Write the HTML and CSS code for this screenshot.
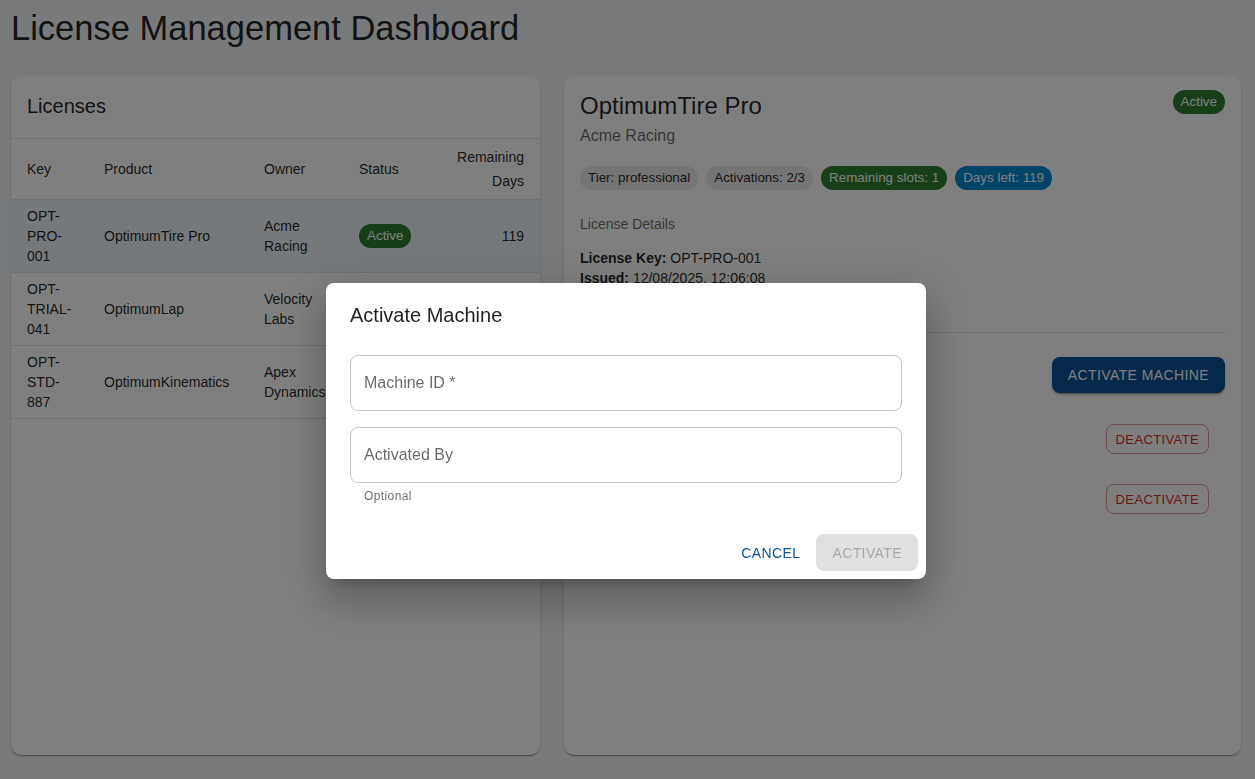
FILE: index.html
```html
<!DOCTYPE html>
<html lang="en">
<head>
<meta charset="utf-8">
<title>License Management Dashboard</title>
<link rel="stylesheet" href="styles.css">
</head>
<body>
<div class="page">
  <h1 class="title">License Management Dashboard</h1>
  <div class="grid">
    <section class="card list-card">
      <div class="card-head"><h2 class="card-title">Licenses</h2></div>
      <table class="lic-table">
        <colgroup>
          <col class="c-key"><col class="c-product"><col class="c-owner"><col class="c-status"><col class="c-days">
        </colgroup>
        <thead>
          <tr><th>Key</th><th>Product</th><th>Owner</th><th>Status</th><th class="num">Remaining Days</th></tr>
        </thead>
        <tbody>
          <tr class="selected"><td>OPT-PRO-001</td><td>OptimumTire Pro</td><td>Acme Racing</td><td><span class="chip chip-success">Active</span></td><td class="num">119</td></tr>
          <tr><td>OPT-TRIAL-041</td><td>OptimumLap</td><td>Velocity Labs</td><td><span class="chip chip-warning">Trial</span></td><td class="num">12</td></tr>
          <tr><td>OPT-STD-887</td><td>OptimumKinematics</td><td>Apex Dynamics</td><td><span class="chip chip-success">Active</span></td><td class="num">287</td></tr>
        </tbody>
      </table>
    </section>

    <section class="card detail-card">
      <div class="detail-head">
        <div>
          <h2 class="detail-title">OptimumTire Pro</h2>
          <p class="owner">Acme Racing</p>
        </div>
        <span class="chip chip-success">Active</span>
      </div>
      <div class="chips">
        <span class="chip">Tier: professional</span>
        <span class="chip">Activations: 2/3</span>
        <span class="chip chip-success">Remaining slots: 1</span>
        <span class="chip chip-info">Days left: 119</span>
      </div>
      <p class="section-label">License Details</p>
      <div class="details">
        <p><b>License Key:</b> OPT-PRO-001</p>
        <p><b>Issued:</b> 12/08/2025, 12:06:08</p>
        <p><b>Expires:</b> 06/04/2026, 12:06:08</p>
      </div>
      <hr class="divider">
      <div class="machines-head">
        <h3 class="machines-title">Activated Machines</h3>
        <button class="btn btn-contained">Activate Machine</button>
      </div>
      <ul class="machines">
        <li class="machine">
          <div><div class="m-id">WS-ENG-01</div><div class="m-sub">Activated by j.smith · 12/08/2025</div></div>
          <button class="btn btn-outlined-error">Deactivate</button>
        </li>
        <li class="machine">
          <div><div class="m-id">LAPTOP-TRACK-07</div><div class="m-sub">Activated by a.jones · 14/08/2025</div></div>
          <button class="btn btn-outlined-error">Deactivate</button>
        </li>
      </ul>
    </section>
  </div>
</div>

<div class="backdrop">
  <div class="dialog" role="dialog" aria-labelledby="dlg-title">
    <h2 class="dialog-title" id="dlg-title">Activate Machine</h2>
    <div class="dialog-content">
      <div class="field"><span class="field-label">Machine ID *</span></div>
      <div class="field field-second"><span class="field-label">Activated By</span></div>
      <div class="helper">Optional</div>
    </div>
    <div class="dialog-actions">
      <button class="btn btn-text">Cancel</button>
      <button class="btn btn-disabled" disabled>Activate</button>
    </div>
  </div>
</div>
</body>
</html>
```

FILE: styles.css
```css
* { box-sizing: border-box; }

html, body {
  margin: 0;
  padding: 0;
  height: 100%;
}

body {
  background: #f2f4f8;
  font-family: "Liberation Sans", Arial, Helvetica, sans-serif;
  color: rgba(0, 0, 0, 0.87);
  overflow: hidden;
}

.page {
  padding: 0 14px 0 11px;
}

.title {
  margin: 7px 0 26px 0;
  font-size: 34.5px;
  line-height: 42px;
  font-weight: 400;
}

.grid {
  display: grid;
  grid-template-columns: 529px 1fr;
  column-gap: 24px;
  height: 680px;
}

.card {
  background: #fff;
  border-radius: 10px;
  box-shadow: 0 2px 1px -1px rgba(0,0,0,0.2), 0 1px 1px 0 rgba(0,0,0,0.14), 0 1px 3px 0 rgba(0,0,0,0.12);
  overflow: hidden;
}

.card-head {
  padding: 15px 16px 16px 16px;
  border-bottom: 1px solid #e0e0e0;
}

.card-title {
  margin: 0;
  font-size: 20px;
  line-height: 32px;
  font-weight: 400;
}

.lic-table {
  width: 100%;
  table-layout: fixed;
  border-collapse: collapse;
  font-size: 14px;
}

.c-key { width: 77px; }
.c-product { width: 160px; }
.c-owner { width: 95px; }
.c-status { width: 97px; }
.c-days { width: 100px; }

.lic-table th {
  text-align: left;
  font-weight: 400;
  line-height: 24px;
  padding: 6px 16px;
  border-bottom: 1px solid #e0e0e0;
  vertical-align: middle;
}

.lic-table td {
  line-height: 20px;
  padding: 6px 16px;
  border-bottom: 1px solid #e0e0e0;
  vertical-align: middle;
  word-wrap: break-word;
}

.lic-table .num { text-align: right; }

.lic-table tr.selected td {
  background: rgba(11, 83, 148, 0.08);
}

.chip {
  display: inline-flex;
  align-items: center;
  height: 24px;
  padding: 0 8px;
  border-radius: 12px;
  font-size: 13.4px;
  line-height: 1;
  background: rgba(0, 0, 0, 0.08);
  color: rgba(0, 0, 0, 0.87);
  white-space: nowrap;
}

.chip-success { background: #2e7d32; color: #fff; }
.chip-info { background: #0288d1; color: #fff; }
.chip-warning { background: #ed6c02; color: #fff; }

.detail-card {
  padding: 15px 16px 16px 16px;
}

.detail-head {
  display: flex;
  justify-content: space-between;
  align-items: flex-start;
}

.detail-title {
  margin: 0;
  font-size: 24px;
  line-height: 32px;
  font-weight: 400;
}

.owner {
  margin: 0;
  font-size: 16px;
  line-height: 28px;
  color: rgba(0, 0, 0, 0.6);
}

.chips {
  display: flex;
  gap: 8px;
  margin-top: 16px;
}

.section-label {
  margin: 24px 0 14px 0;
  font-size: 14px;
  line-height: 20px;
  color: rgba(0, 0, 0, 0.6);
}

.details p {
  margin: 0;
  font-size: 14px;
  line-height: 20px;
}

.divider {
  margin: 24px 0 24px 0;
  border: 0;
  border-top: 1px solid #e0e0e0;
}

.machines-head {
  display: flex;
  justify-content: space-between;
  align-items: center;
}

.machines-title {
  margin: 0;
  font-size: 20px;
  font-weight: 400;
}

.btn {
  font-family: inherit;
  text-transform: uppercase;
  letter-spacing: 0.02857em;
  border: 0;
  cursor: pointer;
  background: none;
}

.btn-contained {
  height: 36px;
  padding: 0 16px;
  font-size: 14px;
  border-radius: 8px;
  background: #0b5394;
  color: #fff;
  box-shadow: 0 3px 1px -2px rgba(0,0,0,0.2), 0 2px 2px 0 rgba(0,0,0,0.14), 0 1px 5px 0 rgba(0,0,0,0.12);
}

.machines {
  list-style: none;
  margin: 16px 0 0 0;
  padding: 0;
}

.machine {
  display: flex;
  justify-content: space-between;
  align-items: center;
  padding: 8px 16px 8px 16px;
  height: 60px;
}

.m-id { font-size: 16px; line-height: 24px; }
.m-sub { font-size: 14px; line-height: 20px; color: rgba(0, 0, 0, 0.6); }

.btn-outlined-error {
  height: 30px;
  padding: 0 9px;
  font-size: 13px;
  border-radius: 8px;
  border: 1px solid rgba(211, 47, 47, 0.5);
  color: #d32f2f;
}

.backdrop {
  position: fixed;
  inset: 0;
  background: rgba(0, 0, 0, 0.5);
  display: flex;
  justify-content: center;
  align-items: flex-start;
  padding: 283px 3px 0 0;
}

.dialog {
  width: 600px;
  background: #fff;
  border-radius: 8px;
  box-shadow: 0 11px 15px -7px rgba(0,0,0,0.2), 0 24px 38px 3px rgba(0,0,0,0.14), 0 9px 46px 8px rgba(0,0,0,0.12);
}

.dialog-title {
  margin: 0;
  padding: 16px 24px;
  font-size: 20px;
  line-height: 32px;
  font-weight: 400;
}

.dialog-content {
  padding: 8px 24px 20px 24px;
}

.field {
  height: 56px;
  border: 1px solid rgba(0, 0, 0, 0.23);
  border-radius: 8px;
  display: flex;
  align-items: center;
  padding: 0 13px;
}

.field-second { margin-top: 16px; }

.field-label {
  font-size: 16px;
  color: rgba(0, 0, 0, 0.6);
}

.helper {
  margin: 3px 14px 0 14px;
  font-size: 12px;
  line-height: 20px;
  letter-spacing: 0.03333em;
  color: rgba(0, 0, 0, 0.6);
}

.dialog-actions {
  display: flex;
  justify-content: flex-end;
  align-items: center;
  gap: 8px;
  padding: 8px;
}

.btn-text {
  height: 37px;
  padding: 0 8px;
  font-size: 14px;
  border-radius: 8px;
  color: #0b5394;
}

.btn-disabled {
  height: 37px;
  padding: 0 16px;
  font-size: 14px;
  border-radius: 8px;
  background: rgba(0, 0, 0, 0.12);
  color: rgba(0, 0, 0, 0.26);
  cursor: default;
}
```
